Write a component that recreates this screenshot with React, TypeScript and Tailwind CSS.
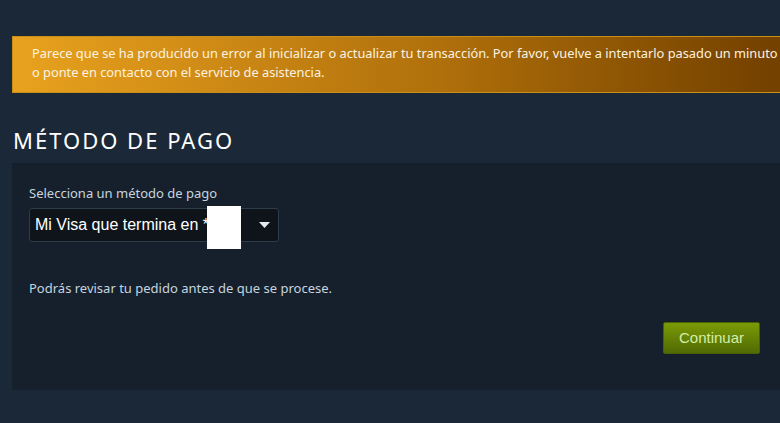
import React from 'react';

const App: React.FC = () => {
  return (
    <div className="w-[780px] h-[423px] overflow-hidden bg-[#1b2838] font-['Noto_Sans','Open_Sans',sans-serif]">
      <div className="w-[960px] pl-3 pt-9">
        {/* Error banner */}
        <div className="h-[57px] border border-[#c88e17] bg-gradient-to-r from-[#e9a21e] via-[#b0700b] via-45% to-[#744100] to-80% pl-[19px] pr-4 pt-[7px]">
          <p className="w-[748px] text-[12.8px] leading-[19px] text-[#fdf3e0]">
            Parece que se ha producido un error al inicializar o actualizar tu transacción. Por favor, vuelve a intentarlo pasado un minuto o ponte en contacto con el servicio de asistencia.
          </p>
        </div>

        {/* Heading */}
        <h2 className="mt-[30px] mb-[6px] pl-px text-[22px] leading-[34px] tracking-[2px] text-white">
          MÉTODO DE PAGO
        </h2>

        {/* Panel */}
        <div className="h-[227px] bg-[#16202d] pl-[17px] pt-[21px]">
          <div className="text-[13px] leading-[18px] text-[#c6d4df]">Selecciona un método de pago</div>
          <div className="relative mt-[6px] flex h-[34px] w-[250px] items-center justify-between rounded-[3px] border border-[#2e3b48] bg-[#0f141b] pl-[5px] pr-[8px] font-['Liberation_Sans',Arial,sans-serif] text-[16px] text-white">
            <span>Mi Visa que termina en *</span>
            <svg width="11" height="6" viewBox="0 0 11 6">
              <path d="M0 0 L11 0 L5.5 6 Z" fill="#e5e9ec" />
            </svg>
            <div className="absolute left-[177px] top-[-3px] h-[43px] w-[34px] bg-white" />
          </div>

          <p className="mt-[37px] text-[13px] leading-[18px] text-[#c6d4df]">
            Podrás revisar tu pedido antes de que se procese.
          </p>

          <div className="mt-[25px] flex w-[731px] justify-end">
            <button className="h-[32px] w-[97px] rounded-[2px] border border-[#4a6004] bg-gradient-to-b from-[#7a9b06] to-[#526a04] font-['Liberation_Sans',Arial,sans-serif] text-[15px] text-[#d2efa9]">
              Continuar
            </button>
          </div>
        </div>
      </div>
    </div>
  );
};

export default App;
